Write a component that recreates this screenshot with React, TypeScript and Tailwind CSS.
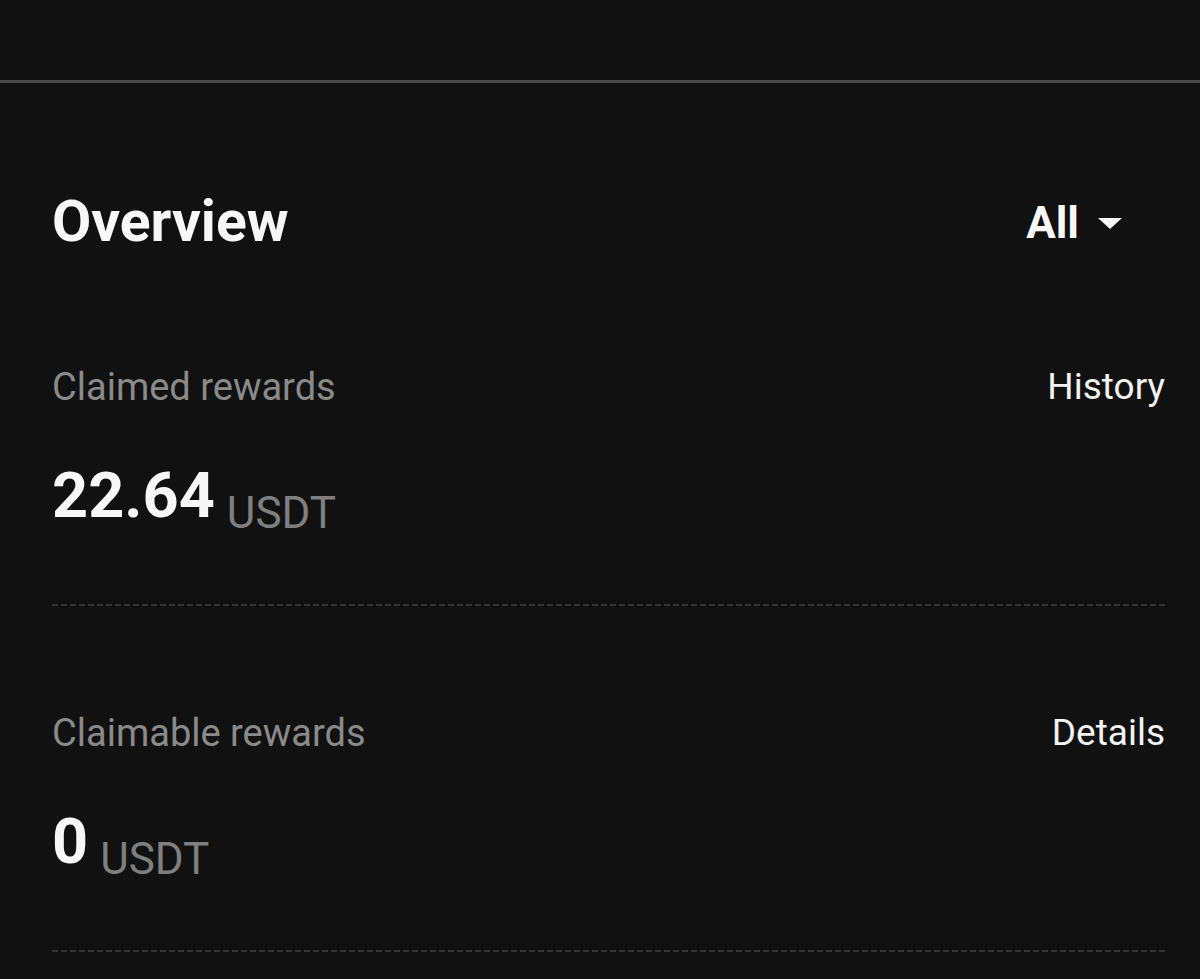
import React from 'react';

interface RewardRowProps {
    label: string;
    action: string;
    amount: string;
    unit: string;
}

// dashed divider drawn with a repeating gradient so dash length is fixed
const Dashed: React.FC = () => (
    <div className="h-[2px] w-full bg-[repeating-linear-gradient(90deg,#333333_0px,#333333_6px,transparent_6px,transparent_9px)]" />
);

const RewardRow: React.FC<RewardRowProps> = ({ label, action, amount, unit }) => (
    <div>
        <div className="flex items-start justify-between">
            <span className="text-[38px] leading-none text-[#8a8a8a]">{label}</span>
            <button className="text-[37px] leading-none text-[#f2f2f2]">{action}</button>
        </div>
        <div className="mt-[58px] flex items-start">
            <span className="text-[63px] font-bold leading-none text-[#f7f7f7]">{amount}</span>
            <span className="ml-[12px] mt-[27px] text-[44px] leading-none text-[#7f7f7f]">{unit}</span>
        </div>
        <div className="mt-[69px]">
            <Dashed />
        </div>
    </div>
);

const App: React.FC = () => {
    return (
        <div className="min-h-[979px] w-full overflow-hidden bg-[#111111] font-['Roboto',sans-serif]">
            {/* top app bar */}
            <div className="h-[80px] bg-[#121212]" />
            <div className="h-[3px] bg-[#4a4a4a]" />

            <div className="pl-[52px] pr-[35px]">
                <div className="mt-[110px] flex items-start justify-between">
                    <h2 className="text-[57px] font-bold leading-none text-[#f7f7f7]">Overview</h2>
                    <button className="mr-[43px] mt-[8px] flex items-center gap-[19px] text-[44px] font-bold leading-none text-[#f7f7f7]">
                        All
                        <svg width="24" height="11" viewBox="0 0 24 11" fill="#f7f7f7">
                            <path d="M0 0h24L12 11z" />
                        </svg>
                    </button>
                </div>

                <div className="mt-[118px]">
                    <RewardRow label="Claimed rewards" action="History" amount="22.64" unit="USDT" />
                </div>
                <div className="mt-[108px]">
                    <RewardRow label="Claimable rewards" action="Details" amount="0" unit="USDT" />
                </div>
            </div>
        </div>
    );
};

export default App;
